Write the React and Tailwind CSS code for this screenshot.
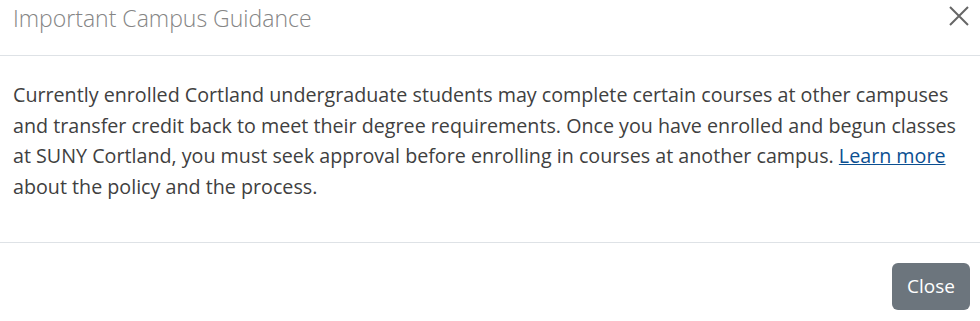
export default function App() {
  return (
    <div className="w-[980px] h-[321px] bg-white font-['Open_Sans',sans-serif] text-[#404040]">
      <div className="flex items-start justify-between h-[56px] border-b border-[#dee2e6] pl-[13px] pr-[10px]">
        <h2 className="text-[23px] font-light text-[#858585] leading-[36px]">Important Campus Guidance</h2>
        <button className="mt-[5px] text-[#666]" aria-label="Close">
          <svg width="22" height="22" viewBox="0 0 22 22" fill="none" stroke="currentColor" strokeWidth="2">
            <path d="M2 2 L20 20 M20 2 L2 20" />
          </svg>
        </button>
      </div>
      <div className="h-[187px] border-b border-[#dee2e6] pl-[13px] pr-[20px] pt-[24px]">
        <p className="text-[19.7px] leading-[30.5px]">
          Currently enrolled Cortland undergraduate students may complete certain courses at other campuses and transfer credit back to meet their degree requirements. Once you have enrolled and begun classes at SUNY Cortland, you must seek approval before enrolling in courses at another campus.{' '}
          <a href="#" className="text-[#0b4f91] underline">Learn more</a> about the policy and the process.
        </p>
      </div>
      <div className="flex justify-end pt-[20px] pr-[10px]">
        <button className="h-[47px] px-[15px] rounded-[6px] bg-[#6c757d] text-white text-[19px]">Close</button>
      </div>
    </div>
  );
}
